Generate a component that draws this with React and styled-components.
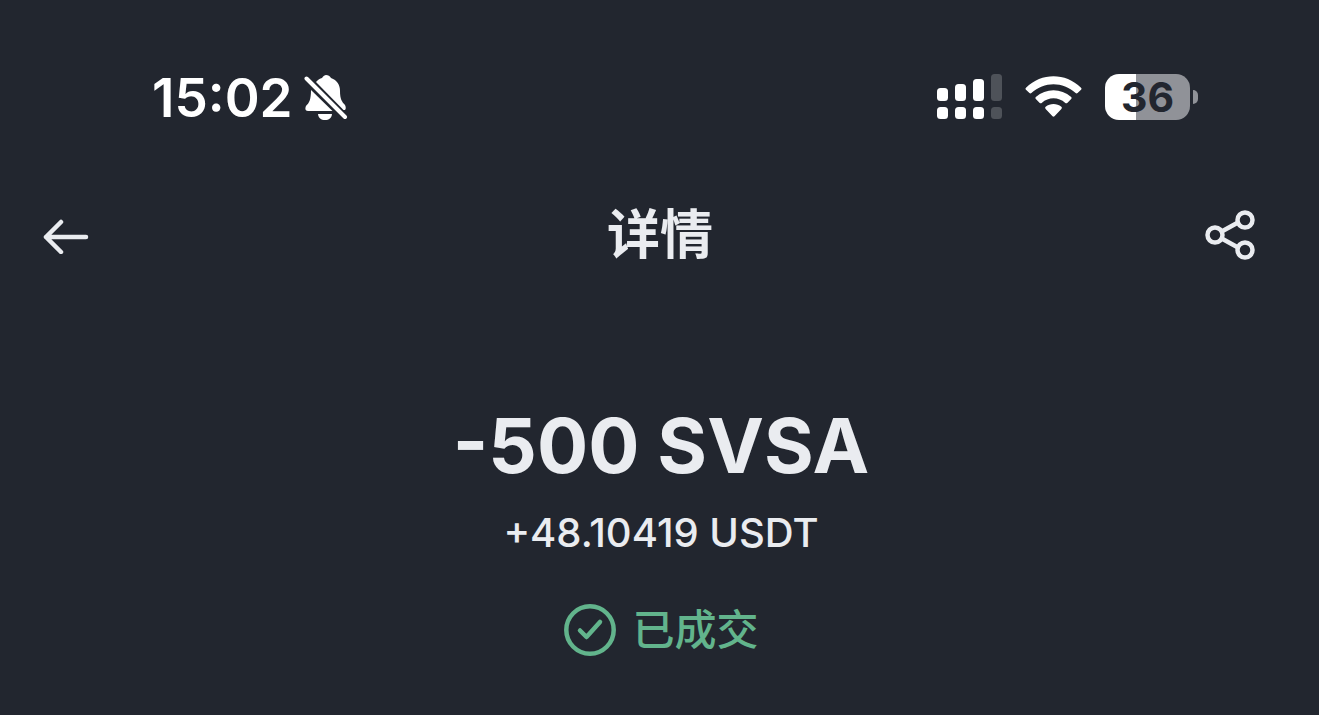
import React from "react";
import styled, { createGlobalStyle } from "styled-components";

const GlobalStyle = createGlobalStyle`
  * {
    box-sizing: border-box;
  }

  body {
    margin: 0;
    background: #22262f;
    color: #eaecf0;
    font-family: Inter, "Noto Sans CJK SC", sans-serif;
  }
`;

const Screen = styled.main`
  min-height: 100vh;
  padding-top: 72px;
`;

const StatusBar = styled.div`
  display: flex;
  align-items: center;
  justify-content: space-between;
  height: 50px;
  padding: 0 121px 0 152px;
  color: #ffffff;
`;

const StatusGroup = styled.div`
  display: flex;
  align-items: center;
  gap: ${(props) => props.$gap}px;
`;

const Clock = styled.time`
  padding-top: 2px;
  font-size: 53px;
  font-weight: 600;
  line-height: 50px;
`;

const Battery = styled.div`
  display: flex;
  align-items: center;
  gap: 3px;
`;

const BatteryBody = styled.div`
  width: 85px;
  height: 46px;
  border-radius: 14px;
  color: #22262f;
  font-size: 41px;
  font-weight: 700;
  line-height: 46px;
  text-align: center;
`;

const BatteryTip = styled.div`
  width: 5px;
  height: 14px;
  border-radius: 0 5px 5px 0;
  background: #909298;
`;

const Header = styled.header`
  display: grid;
  grid-template-columns: 1fr auto 1fr;
  align-items: center;
  height: 70px;
  margin-top: 78px;
  padding: 0 63px 0 42px;
`;

const Title = styled.h1`
  margin: 0;
  padding-left: 22px;
  font-size: 53px;
  font-weight: 700;
  line-height: 70px;
`;

const IconButton = styled.button`
  display: flex;
  justify-self: ${(props) => props.$side};
  padding: 0;
  border: none;
  background: none;
  color: inherit;
  cursor: pointer;
`;

const Summary = styled.section`
  display: flex;
  flex-direction: column;
  align-items: center;
  padding: 130px 0 0 3px;
`;

const Amount = styled.p`
  margin: 0;
  font-size: 76px;
  font-weight: 700;
  line-height: 90px;
`;

const Received = styled.p`
  margin: 18px 0 0;
  font-size: 40px;
  font-weight: 500;
  line-height: 50px;
`;

const OrderStatus = styled.p`
  display: flex;
  align-items: center;
  gap: 15px;
  margin: 42px 0 0;
  color: #62b48c;
  font-size: 42px;
  font-weight: 500;
  line-height: 60px;
`;

const BellOffIcon = () => (
  <svg width="44" height="50" viewBox="0 -2 44 50" fill="currentColor" aria-hidden="true">
    <path d="M12 8C14 5.500 16 4.500 18 4C19 2 21 1 22 1C24 1 26 2 27 4C33 6 36 11 36 17C36 25 38 28 41 31C42 33 42 35 41 36L39.500 36Z" />
    <path d="M7 16L28.500 37H4C1 37 1 34 2 32C5 29 7 26 7 16Z" />
    <path d="M14 40H28C27.500 44 25 46 21 46C17 46 14.500 44 14 40Z" />
    <path d="M2.500 4.500L41 43" stroke="currentColor" strokeWidth="4" strokeLinecap="round" />
  </svg>
);

const SignalIcon = () => (
  <svg width="65" height="46" viewBox="0 0 65 46" fill="currentColor" aria-hidden="true">
    {[14, 10, 5, 0].map((top, i) => (
      <g key={top} opacity={i === 3 ? 0.2 : 1}>
        <rect x={i * 18} y={top} width="11" height={27 - top} rx="3.500" />
        <rect x={i * 18} y="33" width="11" height="12" rx="3.500" />
      </g>
    ))}
  </svg>
);

const WifiIcon = () => (
  <svg width="57" height="44" viewBox="0 0 58 44" fill="currentColor" aria-hidden="true">
    <path d="M1 12.500C17-3 41-3 57 12.500Q58 13.500 57 14.500L53.500 18Q52.500 18.800 51.500 18C38.500 6 19.500 6 6.500 18Q5.500 18.800 4.500 18L1 14.500Q0 13.500 1 12.500Z" />
    <path d="M11 22C21.500 12.700 36.500 12.700 47 22Q48 23 47 24L43 28Q42 28.700 41 28C34 21.800 24 21.800 17 28Q16 28.700 15 28L11 24Q10 23 11 22Z" />
    <path d="M21 32C25.500 28.200 32.500 28.200 37 32Q38.200 33 37 34.200L30 41.500Q29 42.500 28 41.500L21 34.200Q19.800 33 21 32Z" />
  </svg>
);

const BackIcon = () => (
  <svg width="48" height="38" viewBox="0 0 48 38" fill="none" stroke="currentColor" strokeWidth="4.500" strokeLinecap="round" strokeLinejoin="round" aria-hidden="true">
    <path d="M19 6L4 21L19 36M4 21H44" />
  </svg>
);

const ShareIcon = () => (
  <svg width="52" height="52" viewBox="0 0 52 52" fill="none" stroke="currentColor" strokeWidth="4.500" aria-hidden="true">
    <circle cx="11" cy="26" r="7.500" />
    <circle cx="41" cy="11" r="7.500" />
    <circle cx="41" cy="41" r="7.500" />
    <path d="M17.700 22.500L34 13.500M17.700 29.500L34 38.500" />
  </svg>
);

const CheckIcon = () => (
  <svg width="54" height="54" viewBox="0 0 54 54" fill="none" stroke="currentColor" strokeWidth="4.500" strokeLinecap="round" strokeLinejoin="round" aria-hidden="true">
    <circle cx="27" cy="27" r="23.700" />
    <path d="M17 27.500L23.500 34L37 19" />
  </svg>
);

const BatteryLevel = ({ level }) => (
  <Battery>
    <BatteryBody
      style={{
        background: `linear-gradient(to right, #ffffff ${level}%, #909298 ${level}%)`,
      }}
    >
      {level}
    </BatteryBody>
    <BatteryTip />
  </Battery>
);

const App = () => {
  return (
    <Screen>
      <GlobalStyle />
      <StatusBar>
        <StatusGroup $gap={11}>
          <Clock>15:02</Clock>
          <BellOffIcon />
        </StatusGroup>
        <StatusGroup $gap={23}>
          <SignalIcon />
          <WifiIcon />
          <BatteryLevel level={36} />
        </StatusGroup>
      </StatusBar>
      <Header>
        <IconButton type="button" aria-label="返回" $side="start">
          <BackIcon />
        </IconButton>
        <Title>详情</Title>
        <IconButton type="button" aria-label="分享" $side="end">
          <ShareIcon />
        </IconButton>
      </Header>
      <Summary>
        <Amount>-500 SVSA</Amount>
        <Received>+48.10419 USDT</Received>
        <OrderStatus>
          <CheckIcon />
          <span>已成交</span>
        </OrderStatus>
      </Summary>
    </Screen>
  );
};

export default App;
